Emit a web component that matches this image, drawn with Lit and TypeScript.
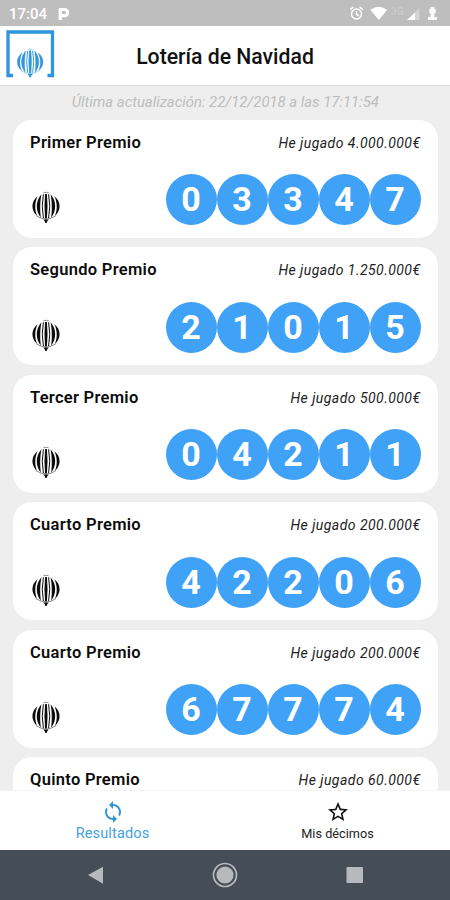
import { LitElement, html, css, svg } from "lit";
import { customElement, property } from "lit/decorators.js";

interface Prize {
  name: string;
  amount: string;
  number: string;
}

const PRIZES: Prize[] = [
  { name: "Primer Premio", amount: "4.000.000€", number: "03347" },
  { name: "Segundo Premio", amount: "1.250.000€", number: "21015" },
  { name: "Tercer Premio", amount: "500.000€", number: "04211" },
  { name: "Cuarto Premio", amount: "200.000€", number: "42206" },
  { name: "Cuarto Premio", amount: "200.000€", number: "67774" },
  { name: "Quinto Premio", amount: "60.000€", number: "" },
];

// Lottery drum: five curved staves, thin rim, and a spout at the bottom.
const drum = svg`
  <path d="M6.600 5.300C-.2 10.500-.2 19.500 6 24.800C3.500 18.500 3.700 11.500 6.600 5.300Z"/>
  <path d="M23.400 5.300C30.200 10.500 30.200 19.500 24 24.800C26.500 18.500 26.300 11.500 23.400 5.300Z"/>
  <path d="M10.400 3.300C4.400 10 4.400 20 9.800 26.800C8.900 19 8.900 11 10.400 3.300Z"/>
  <path d="M19.600 3.300C25.600 10 25.600 20 20.200 26.800C21.100 19 21.100 11 19.600 3.300Z"/>
  <path d="M14.100 3h1.800q1.300 12.500 0 24.500h-1.800q-1.300-12 0-24.500Z"/>
  <path d="M12.400 3.300q-2.300 12 0 23.700M17.600 3.300q2.300 12 0 23.700" fill="none" stroke="currentColor" stroke-width="1"/>
  <path d="M5 24.600Q15 31.500 25 24.600" fill="none" stroke="currentColor" stroke-width=".7" opacity=".7"/>
  <path d="M12.300 1.800Q15 .6 17.700 1.800" fill="none" stroke="currentColor" stroke-width=".9" opacity=".5"/>
  <path d="M12.300 28.500h5.400l-1.500 1.700-.5 1.800h-1.400l-.5-1.800Z"/>`;

@customElement("lottery-card")
export class LotteryCard extends LitElement {
  @property({ attribute: false }) prize!: Prize;

  static styles = css`
    :host {
      display: flex;
      flex-direction: column;
      flex: none;
      box-sizing: border-box;
      height: 118.400px;
      padding: 13px 17px 0;
      border-radius: 19px;
      background: #fff;
      color: #0c0c0c;
    }
    .head {
      display: flex;
      justify-content: space-between;
      height: 20px;
      line-height: 20px;
      white-space: nowrap;
    }
    .name {
      font-size: 16.500px;
      font-weight: 600;
      letter-spacing: 0.290px;
    }
    .amount {
      font-size: 14px;
      font-style: italic;
      letter-spacing: 0.450px;
      color: #222;
    }
    .row {
      display: flex;
      justify-content: space-between;
      margin-top: 21.500px;
    }
    .drum {
      width: 30px;
      height: 34px;
      margin: 17px 0 0 1px;
      fill: currentColor;
    }
    .balls {
      display: flex;
    }
    .ball {
      width: 51px;
      height: 51px;
      border-radius: 50%;
      background: #3fa2f6;
      color: #fff;
      font-size: 34px;
      font-weight: 700;
      line-height: 51px;
      text-align: center;
    }
  `;

  render() {
    const { name, amount, number } = this.prize;
    return html`
      <div class="head">
        <span class="name">${name}</span>
        <span class="amount">He jugado ${amount}</span>
      </div>
      <div class="row">
        <svg class="drum" viewBox="0 0 30 34">${drum}</svg>
        <div class="balls">${[...number].map((d) => html`<span class="ball">${d}</span>`)}</div>
      </div>
    `;
  }
}

@customElement("app-root")
export class AppRoot extends LitElement {
  static styles = css`
    :host {
      display: flex;
      flex-direction: column;
      width: 450px;
      height: 900px;
      overflow: hidden;
      background: #eee;
      font-family: Roboto, "Liberation Sans", sans-serif;
    }
    .status {
      display: flex;
      align-items: center;
      flex: none;
      box-sizing: border-box;
      height: 26px;
      padding: 2px 10px 0 9px;
      background: #bebebe;
      color: #fff;
      font-size: 15px;
      font-weight: 500;
    }
    .parking {
      width: 12px;
      height: 14px;
      margin-left: 11px;
    }
    .indicators {
      width: 92px;
      height: 16px;
      margin-left: auto;
    }
    .header {
      display: grid;
      grid-template-columns: 60px 1fr 60px;
      align-items: center;
      flex: none;
      box-sizing: border-box;
      height: 60px;
      border-bottom: 1px solid #dcdcdc;
      background: #fff;
    }
    .logo {
      width: 50px;
      height: 50px;
      margin: -3px 0 0 5px;
      color: #2f95dc;
      fill: currentColor;
    }
    .title {
      margin: 2px 0 0;
      text-align: center;
      font-size: 21.200px;
      font-weight: 500;
      line-height: 28px;
      color: #111;
      white-space: nowrap;
    }
    .list {
      display: flex;
      flex-direction: column;
      flex: 1;
      min-height: 0;
      gap: 9.100px;
      padding: 0 12.500px 0 13px;
      overflow: hidden;
    }
    .updated {
      flex: none;
      height: 24.500px;
      line-height: 33px;
      text-align: center;
      font-size: 14.850px;
      font-style: italic;
      color: #bdbdbd;
      white-space: nowrap;
    }
    .tabs {
      display: grid;
      grid-template-columns: 1fr 1fr;
      flex: none;
      box-sizing: border-box;
      height: 60px;
      border-top: 1px solid #f4f4f4;
      background: #fff;
    }
    .tab {
      display: flex;
      flex-direction: column;
      align-items: center;
      padding-top: 9px;
      font-size: 12.700px;
      line-height: 20px;
      color: #222;
    }
    .tab.active {
      font-size: 14.500px;
      letter-spacing: 0.150px;
      color: #459fe0;
    }
    .tab svg {
      width: 24px;
      height: 24px;
      flex: none;
      fill: #111;
    }
    .tab.active svg {
      fill: #2f95dc;
    }
    .nav {
      display: grid;
      grid-template-columns: 66px 1fr 66px 1fr 66px;
      flex: none;
      height: 50px;
      padding: 0 62px;
      align-items: center;
      justify-items: center;
      background: #454d56;
    }
    .nav svg {
      width: 28px;
      height: 28px;
      fill: #b4babd;
    }
    .back {
      grid-column: 1;
    }
    .home {
      grid-column: 3;
    }
    .recent {
      grid-column: 5;
    }
  `;

  render() {
    return html`
      <div class="status">
        <span>17:04</span>
        <svg class="parking" viewBox="0 0 12 14">
          <path d="M2.200 13V2.500H6.500a3 3 0 0 1 0 6.200H3" fill="none" stroke="#fff" stroke-width="3.200" stroke-linejoin="round"/>
        </svg>
        <svg class="indicators" viewBox="0 0 92 16" fill="#fff">
          <g fill="none" stroke="#fff" stroke-width="1.500">
            <circle cx="8.500" cy="8" r="5"/>
            <path d="M8.500 5v3.300l2.400 1.600M2.200 3.600L5.400 1M14.800 3.600L11.600 1"/>
          </g>
          <path d="M22.500 3.900Q30.800-2.200 39 3.900L30.800 14Z"/>
          <text x="43" y="9" font-size="10" fill="#cacaca">3G</text>
          <path d="M71.500 2V14H59.500Z" opacity=".35"/>
          <path d="M67 6.500V14H59Z"/>
          <path d="M82.500 1h4v2h1.200v4.500h-1.400v3.500h2.700v3h-9v-3h2.700v-3.500h-1.400v-4.500h1.200z" opacity=".9"/>
        </svg>
      </div>
      <div class="header">
        <svg class="logo" viewBox="0 0 50 50">
          <path d="M8 46.500H3V3H47.500V46.500H42.500" fill="none" stroke="currentColor" stroke-width="3.300"/>
          <g transform="translate(10.900 18.800) scale(.95 .92)" stroke="currentColor" stroke-width=".3">${drum}</g>
        </svg>
        <h1 class="title">Lotería de Navidad</h1>
      </div>
      <div class="list">
        <div class="updated">Última actualización: 22/12/2018 a las 17:11:54</div>
        ${PRIZES.map((p) => html`<lottery-card .prize=${p}></lottery-card>`)}
      </div>
      <div class="tabs">
        <div class="tab active">
          <svg viewBox="0 0 24 24">
            <path d="M12 4V1L8 5l4 4V6c3.310 0 6 2.690 6 6 0 1.010-.25 1.970-.7 2.800l1.460 1.460C19.540 15.030 20 13.570 20 12c0-4.420-3.580-8-8-8zm0 14c-3.310 0-6-2.690-6-6 0-1.010.25-1.970.7-2.800L5.240 7.740C4.460 8.970 4 10.430 4 12c0 4.420 3.580 8 8 8v3l4-4-4-4v3z"/>
          </svg>
          <span>Resultados</span>
        </div>
        <div class="tab">
          <svg viewBox="0 0 24 24">
            <path d="M22 9.240l-7.190-.62L12 2 9.190 8.630 2 9.240l5.460 4.730L5.820 21 12 17.270 18.180 21l-1.630-7.030L22 9.240zM12 15.400l-3.760 2.270 1-4.280-3.320-2.880 4.380-.38L12 6.100l1.710 4.040 4.380.38-3.320 2.880 1 4.280L12 15.400z"/>
          </svg>
          <span>Mis décimos</span>
        </div>
      </div>
      <div class="nav">
        <svg class="back" viewBox="0 0 28 28"><path d="M7 14L22 5.800V22.700Z"/></svg>
        <svg class="home" viewBox="0 0 28 28">
          <circle cx="14" cy="14" r="11.500" fill="none" stroke="#b4babd" stroke-width="1.700"/>
          <circle cx="14" cy="14" r="8.600"/>
        </svg>
        <svg class="recent" viewBox="0 0 28 28"><rect x="5.500" y="6" width="16.500" height="16" rx="1"/></svg>
      </div>
    `;
  }
}
